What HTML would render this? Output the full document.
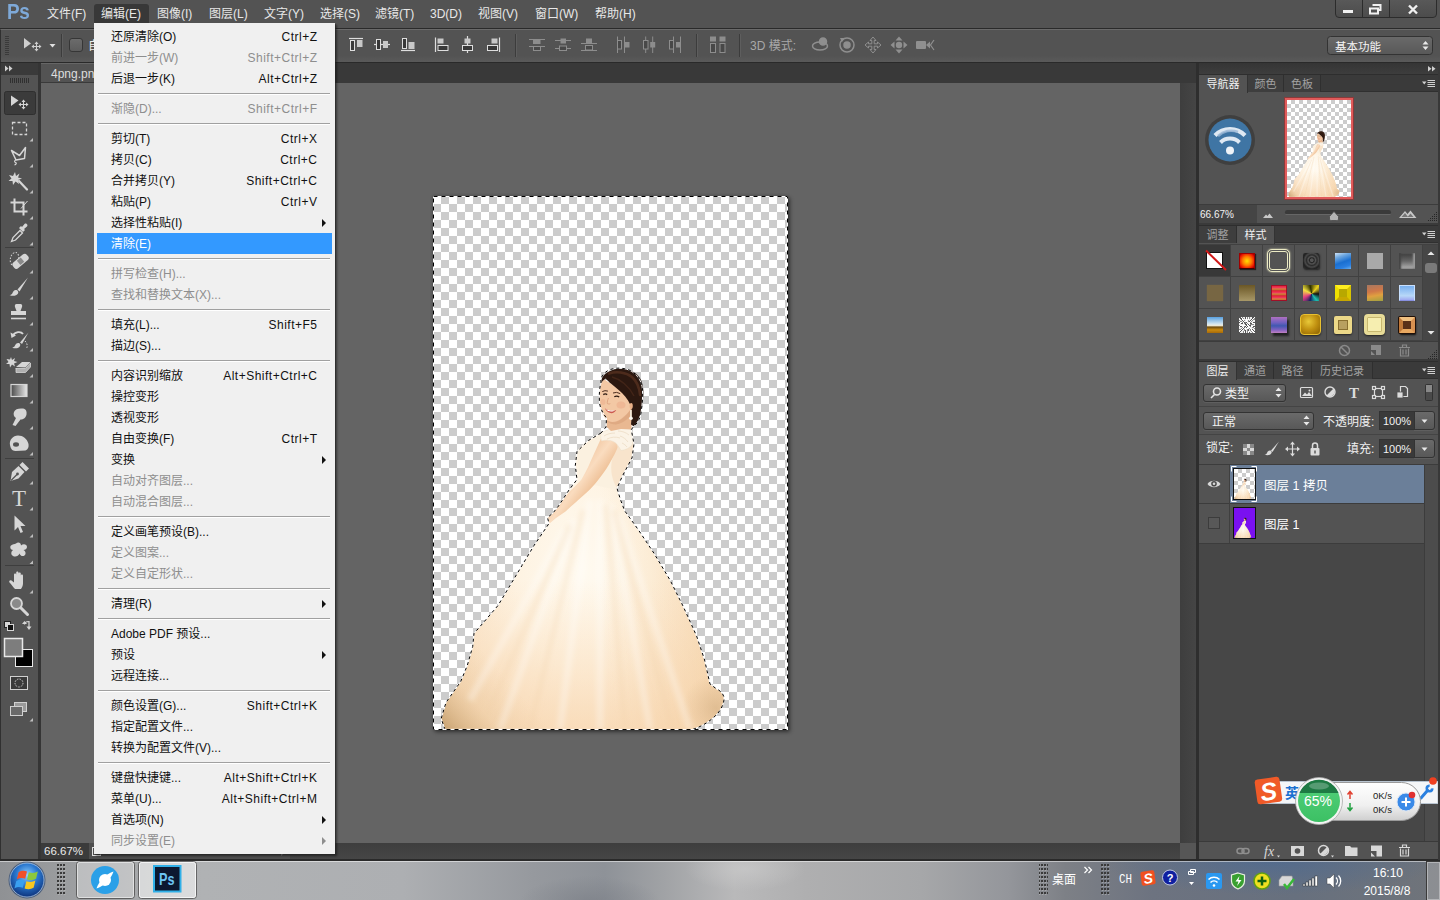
<!DOCTYPE html>
<html lang="zh-CN">
<head>
<meta charset="utf-8">
<title>Photoshop</title>
<style>
*{box-sizing:border-box;margin:0;padding:0}
html,body{width:1440px;height:900px;overflow:hidden;background:#535353}
body{position:relative;font-family:"Liberation Sans","Noto Sans CJK SC",sans-serif;font-size:12px;color:#e6e6e6;-webkit-font-smoothing:antialiased}
.a{position:absolute}
svg{position:absolute;overflow:visible}
/* menubar */
#menubar{left:0;top:0;width:1440px;height:28px;background:#535353}
#menubar .mi{position:absolute;top:6px;height:18px;line-height:17px;font-size:12px;color:#e8e8e8;white-space:nowrap}
#mbline{left:0;top:28px;width:1440px;height:1px;background:#2a2a2a}
#optbar{left:0;top:29px;width:1440px;height:33px;background:linear-gradient(#535353 0,#535353 80%,#5a5a5a 100%);border-top:1px solid #6a6a6a;border-left:1px solid #303030}
#optline{left:0;top:62px;width:1440px;height:1px;background:#2a2a2a}
/* toolbox */
#toolbox{left:0;top:63px;width:38px;height:797px;background:#535353;border-left:1px solid #303030}
#tbhead{left:1px;top:63px;width:37px;height:12px;background:#3a3a3a}
#tbdiv{left:38px;top:63px;width:3px;height:797px;background:#353535}
/* doc area */
#tabbar{left:41px;top:63px;width:1157px;height:20px;background:#393939}
#tab{left:41px;top:63px;width:200px;height:20px;background:#535353;color:#ddd;font-size:12px;line-height:21px;padding-left:10px;border-top:1px solid #666;border-bottom:1px solid #3a3a3a}
#canvas{left:41px;top:83px;width:1139px;height:760px;background:#646464}
#vscroll{left:1180px;top:83px;width:16px;height:760px;background:linear-gradient(90deg,#3e3e3e,#454545)}
#hscroll{left:41px;top:843px;width:1139px;height:16px;background:linear-gradient(#3e3e3e,#464646)}
#scorner{left:1180px;top:843px;width:16px;height:16px;background:#565656}
#statinfo{left:89px;top:843px;width:201px;height:16px;background:#4f4f4f}
#status{left:41px;top:843px;width:48px;height:16px;background:#3b3b3b;color:#eaeaea;font-size:11.500px;line-height:16px;padding-left:3px}
#dockdiv{left:1196px;top:63px;width:3px;height:797px;background:#2e2e2e}
</style>
</head>
<body>
<div class="a" id="menubar">
  <div class="a" style="left:7px;top:0px;font-size:22px;font-weight:bold;color:#7ea9d8;letter-spacing:-0.5px;line-height:24px;transform:scaleX(0.86);transform-origin:0 0">Ps</div>
  <div class="a" style="left:94px;top:4px;width:55px;height:20px;background:#383838;border-radius:3px 3px 0 0"></div>
  <div class="mi" style="left:47px">文件(F)</div>
  <div class="mi" style="left:101px">编辑(E)</div>
  <div class="mi" style="left:157px">图像(I)</div>
  <div class="mi" style="left:209px">图层(L)</div>
  <div class="mi" style="left:264px">文字(Y)</div>
  <div class="mi" style="left:320px">选择(S)</div>
  <div class="mi" style="left:375px">滤镜(T)</div>
  <div class="mi" style="left:430px">3D(D)</div>
  <div class="mi" style="left:478px">视图(V)</div>
  <div class="mi" style="left:535px">窗口(W)</div>
  <div class="mi" style="left:595px">帮助(H)</div>
  <!-- window controls -->
  <div class="a" style="left:1335px;top:-3px;width:102px;height:21px;border:1px solid #2c2c2c;border-radius:0 0 4px 4px;background:linear-gradient(#5a5a5a,#4c4c4c)"></div>
  <div class="a" style="left:1362px;top:0;width:1px;height:17px;background:#2c2c2c"></div>
  <div class="a" style="left:1389px;top:0;width:1px;height:17px;background:#2c2c2c"></div>
  <div class="a" style="left:1343px;top:10px;width:10px;height:3px;background:#f0f0f0"></div>
  <svg style="left:1369px;top:4px" width="13" height="11" viewBox="0 0 13 11"><path d="M3.5 1h8v5h-2.5M1 4.5h8v5h-8z" fill="none" stroke="#f0f0f0" stroke-width="2"/></svg>
  <svg style="left:1408px;top:5px" width="10" height="9" viewBox="0 0 10 9"><path d="M1 0.5L9 8.5M9 0.5L1 8.5" stroke="#f0f0f0" stroke-width="2.4"/></svg>
</div>
<div class="a" id="mbline"></div>
<div class="a" id="optbar"></div>
<div class="a" id="optline"></div>
<div class="a" id="toolbox"></div>
<div class="a" id="tbhead"></div>
<div class="a" id="tbdiv"></div>
<div class="a" id="tabbar"></div>
<div class="a" id="tab">4png.png</div>
<div class="a" id="canvas"></div>
<div class="a" id="vscroll"></div>
<div class="a" id="hscroll"></div>
<div class="a" id="scorner"></div>
<div class="a" id="statinfo"></div>
<div class="a" id="status">66.67%</div>
<svg style="left:89px;top:843px" width="201" height="16" viewBox="89 843 201 16"><rect x="92.500" y="847.500" width="8" height="8" fill="none" stroke="#e0e0e0"/><path d="M281 853l4 -2.500v5z" fill="#d0d0d0" transform="rotate(180 283 853)"/></svg>
<div class="a" id="dockdiv"></div>
<svg style="left:0;top:0" width="1440" height="63" viewBox="0 0 1440 63"><path d="M5 36.5h4" stroke="#3a3a3a"/><path d="M5 38.5h4" stroke="#3a3a3a"/><path d="M5 40.5h4" stroke="#3a3a3a"/><path d="M5 42.5h4" stroke="#3a3a3a"/><path d="M5 44.5h4" stroke="#3a3a3a"/><path d="M5 46.5h4" stroke="#3a3a3a"/><path d="M5 48.5h4" stroke="#3a3a3a"/><path d="M5 50.5h4" stroke="#3a3a3a"/><path d="M5 52.5h4" stroke="#3a3a3a"/><path d="M5 54.5h4" stroke="#3a3a3a"/><path d="M24 38V48.500L31 43.500z" fill="#cfcfcf"/><path d="M36.500 42.500v8M32.500 46.500h8" stroke="#cfcfcf" stroke-width="1.100"/><path d="M36.500 41.500l2 2.400h-4zM36.500 51.500l2 -2.400h-4zM31.500 46.500l2.400 -2v4zM41.500 46.500l-2.400 -2v4z" fill="#cfcfcf"/><path d="M49.500 44h6l-3 3.500z" fill="#e0e0e0"/><path d="M61.500 34v23" stroke="#3c3c3c"/><path d="M62.500 34v23" stroke="#5e5e5e"/><defs><linearGradient id="cbg" x1="0" y1="0" x2="0" y2="1"><stop offset="0" stop-color="#6c6c6c"/><stop offset="1" stop-color="#5c5c5c"/></linearGradient></defs><rect x="69.500" y="38.500" width="13" height="13" rx="2.500" fill="url(#cbg)" stroke="#363636"/><text x="88" y="50" font-size="12" fill="#f0f0f0" font-family="Liberation Sans,Noto Sans CJK SC,sans-serif">自动选择:</text><path d="M349 38.500h14" stroke="#dedede" stroke-width="1.200"/><rect x="350.5" y="40.500" width="4" height="10" fill="#383838" stroke="#dedede"/><rect x="357" y="40" width="5.500" height="7" fill="#c8c8c8"/><path d="M374 44.500h16" stroke="#dedede" stroke-width="1.200"/><rect x="376.5" y="39.500" width="4" height="10" fill="#383838" stroke="#dedede"/><rect x="383" y="41" width="5" height="7" fill="#c8c8c8"/><path d="M401 50.500h14" stroke="#dedede" stroke-width="1.200"/><rect x="402.5" y="38.500" width="4" height="10" fill="#383838" stroke="#dedede"/><rect x="408.5" y="42" width="6" height="7" fill="#c8c8c8"/><path d="M435.5 37.500v14.500" stroke="#dedede" stroke-width="1.200"/><rect x="437.5" y="38.500" width="6" height="5" fill="#c8c8c8"/><rect x="438" y="45.500" width="10" height="5" fill="#383838" stroke="#dedede"/><path d="M467.5 36v17" stroke="#dedede" stroke-width="1.200"/><rect x="464.5" y="38.500" width="6" height="5" fill="#c8c8c8"/><rect x="462.5" y="45.500" width="10" height="5" fill="#383838" stroke="#dedede"/><path d="M499.5 37.500v14.500" stroke="#dedede" stroke-width="1.200"/><rect x="491.5" y="38.500" width="6" height="5" fill="#c8c8c8"/><rect x="487.5" y="45.500" width="10" height="5" fill="#383838" stroke="#dedede"/><path d="M515.500 34v23" stroke="#3c3c3c"/><path d="M516.500 34v23" stroke="#5e5e5e"/><path d="M529 39.5h16" stroke="#8d8d8d" stroke-width="1"/><rect x="533" y="40" width="7.5" height="4" fill="#8d8d8d"/><path d="M529 46.5h16" stroke="#8d8d8d" stroke-width="1"/><rect x="533.5" y="46.5" width="7" height="4" fill="#484848" stroke="#8d8d8d"/><rect x="560.5" y="38.5" width="5.5" height="5" fill="#8d8d8d"/><path d="M555 40.5h16" stroke="#8d8d8d" stroke-width="1"/><rect x="559.5" y="46" width="7" height="4.5" fill="#484848" stroke="#8d8d8d"/><path d="M555 48.5h4.5" stroke="#8d8d8d" stroke-width="1"/><path d="M566.5 48.5h4.5" stroke="#8d8d8d" stroke-width="1"/><rect x="586" y="38.5" width="6" height="5" fill="#8d8d8d"/><path d="M581 43.5h16" stroke="#8d8d8d" stroke-width="1"/><rect x="585.5" y="45.5" width="7" height="4.5" fill="#484848" stroke="#8d8d8d"/><path d="M581 50.5h16" stroke="#8d8d8d" stroke-width="1"/><path d="M617.5 36.5v16.5" stroke="#8d8d8d" stroke-width="1"/><rect x="617.5" y="40.5" width="4" height="8.5" fill="#484848" stroke="#8d8d8d"/><path d="M624.5 36.5v16.5" stroke="#8d8d8d" stroke-width="1"/><rect x="625" y="42" width="4.5" height="5.5" fill="#8d8d8d"/><rect x="643.5" y="40.5" width="4.5" height="8.5" fill="#484848" stroke="#8d8d8d"/><path d="M645.7 36.5v4" stroke="#8d8d8d" stroke-width="1"/><path d="M645.7 49v4" stroke="#8d8d8d" stroke-width="1"/><rect x="650.2" y="42" width="5" height="5.5" fill="#8d8d8d"/><path d="M652.7 36.5v16.5" stroke="#8d8d8d" stroke-width="1"/><path d="M673.5 36.5v16.5" stroke="#8d8d8d" stroke-width="1"/><rect x="669.5" y="40.5" width="4" height="8.5" fill="#484848" stroke="#8d8d8d"/><path d="M680.5 36.5v16.5" stroke="#8d8d8d" stroke-width="1"/><rect x="676" y="42" width="4.5" height="5.5" fill="#8d8d8d"/><path d="M696.500 34v23" stroke="#3c3c3c"/><path d="M697.500 34v23" stroke="#5e5e5e"/><rect x="710" y="36.5" width="6" height="5" fill="#8d8d8d"/><rect x="710.5" y="43.5" width="5" height="9" fill="#484848" stroke="#8d8d8d"/><rect x="719.5" y="36.5" width="6" height="5" fill="#8d8d8d"/><rect x="720" y="43.5" width="5" height="9" fill="#484848" stroke="#8d8d8d"/><path d="M739.500 34v23" stroke="#3c3c3c"/><path d="M740.500 34v23" stroke="#5e5e5e"/><text x="750" y="49.500" font-size="12" fill="#a8a8a8" font-family="Liberation Sans,Noto Sans CJK SC,sans-serif" letter-spacing="0">3D 模式:</text><g fill="none" stroke="#8f8f8f" stroke-width="1.500"><ellipse cx="820" cy="46" rx="7.500" ry="4"/><circle cx="823" cy="41.500" r="3.500" fill="#8f8f8f"/></g><g fill="none" stroke="#8f8f8f" stroke-width="1.500"><circle cx="847" cy="45" r="7"/><circle cx="847" cy="45" r="3" fill="#8f8f8f"/></g><path d="M840 38l5 0l-3 4z" fill="#8f8f8f"/><path d="M873 37l3 3.5h-1.8v3.3h3.3v-1.8l3.5 3l-3.5 3v-1.8h-3.3v3.3h1.8l-3 3.5l-3 -3.5h1.8v-3.3h-3.3v1.8l-3.5 -3l3.5 -3v1.8h3.3v-3.3h-1.8z" fill="none" stroke="#8f8f8f" stroke-width="1"/><g fill="#8f8f8f"><path d="M899 36.500l-3.500 4h7zM899 53.500l-3.500 -4h7zM890.500 45l4 -3.500v7zM907.500 45l-4 -3.500v7z"/><circle cx="899" cy="45" r="3.200"/></g><g fill="#8f8f8f"><rect x="916" y="41" width="10" height="8" rx="1"/><path d="M926 45l4 -3.500v7z"/></g><path d="M934 40l-3.500 5l3.500 5" fill="none" stroke="#8f8f8f" stroke-width="1.200"/><defs><linearGradient id="ddg" x1="0" y1="0" x2="0" y2="1"><stop offset="0" stop-color="#6a6a6a"/><stop offset="1" stop-color="#585858"/></linearGradient></defs><rect x="1327.500" y="36.500" width="105" height="18" rx="3" fill="url(#ddg)" stroke="#333"/><text x="1335" y="50.500" font-size="11.500" fill="#f4f4f4" font-family="Liberation Sans,Noto Sans CJK SC,sans-serif">基本功能</text><path d="M1422.500 44.500l3 -3.500l3 3.500zM1422.500 46.500l3 3.500l3 -3.500z" fill="#e8e8e8"/></svg>
<svg style="left:0;top:0" width="41" height="860" viewBox="0 0 41 860"><path d="M5 65.500l3.500 3l-3.500 3zM9 65.500l3.500 3l-3.500 3z" fill="#d0d0d0"/><path d="M10.500 78v5M12.500 78v5M14.500 78v5M16.500 78v5M18.500 78v5M20.500 78v5M22.500 78v5M24.500 78v5M26.500 78v5M28.500 78v5" stroke="#303030" stroke-width="1"/><rect x="4.500" y="91.500" width="31" height="23" rx="2" fill="#3b3b3b" stroke="#2f2f2f"/><g transform="translate(19,103)"><path d="M-8 -7.500V3L-0.500 -2.500z" fill="#d6d6d6"/><path d="M4.500 -2.500v8M0.500 1.500h8" stroke="#d6d6d6" stroke-width="1.100" fill="none"/><path d="M4.500 -3.500l2 2.400h-4zM4.500 6.500l2 -2.400h-4zM-0.500 1.500l2.400 -2v4zM9.500 1.500l-2.400 -2v4z" fill="#d6d6d6"/></g><g transform="translate(19,129)"><rect x="-6.5" y="-6.5" width="14" height="12" fill="none" stroke="#d6d6d6" stroke-width="1.3" stroke-dasharray="3 2"/><path d="M14 9v3.5h-3.5z" fill="#bdbdbd"/></g><g transform="translate(19,155)"><path d="M-7.5 -4.5L0.5 0.5L6.5 -7.5L5.5 3.5L-3 5z" fill="none" stroke="#d6d6d6" stroke-width="1.5" stroke-linejoin="round"/><path d="M-3 5c-1.5 0-2 2-0.5 2.5s0.5 2-1 2.500" fill="none" stroke="#d6d6d6" stroke-width="1.2"/><path d="M14 9v3.5h-3.5z" fill="#bdbdbd"/></g><g transform="translate(19,181)"><path d="M-4 -9l1 4l3.500 -2.500l-1.500 4l4 1l-4 1.500l1 4l-3.500 -2.500l-2.500 3.500l-0.500 -4l-4 0l3 -2.500l-2.500 -3.500l4 1z" fill="#d6d6d6"/><path d="M0 0l8 8.500" stroke="#d6d6d6" stroke-width="2.2" stroke-linecap="round"/><path d="M14 9v3.5h-3.5z" fill="#bdbdbd"/></g><g transform="translate(19,207)"><path d="M-4.5 -8.500v13h13M-8.500 -4.500h13v13" fill="none" stroke="#d6d6d6" stroke-width="2"/><path d="M2 1.500L8.500 -6" stroke="#d6d6d6" stroke-width="1"/><path d="M14 9v3.5h-3.5z" fill="#bdbdbd"/></g><g transform="translate(19,233)"><path d="M-7.500 8.500l1.500 -4l7 -7l2.500 2.500l-7 7z" fill="none" stroke="#d6d6d6" stroke-width="1.300"/><path d="M0 -5l2 -2l1 1l2.500 -3c1.500 -1.500 4 1 2.500 2.500l-3 2.500l1 1l-2 2z" fill="#d6d6d6"/><path d="M14 9v3.5h-3.5z" fill="#bdbdbd"/></g><path d="M5 247.5h29" stroke="#3e3e3e"/><g transform="translate(19,261)"><ellipse cx="-5" cy="-1" rx="4" ry="6.500" fill="none" stroke="#d6d6d6" stroke-width="1" stroke-dasharray="1.500 1.500" transform="rotate(15)"/><rect x="-9" y="-3.500" width="18" height="7.500" rx="3" fill="#d6d6d6" transform="rotate(-40) translate(1,1)"/><rect x="-2.500" y="-2.500" width="5" height="5.500" fill="#8a8a8a" transform="rotate(-40) translate(1,1)"/><path d="M14 9v3.5h-3.5z" fill="#bdbdbd"/></g><g transform="translate(19,287)"><path d="M9 -9.500L-1.500 2.500L0.500 4.500z" fill="#d6d6d6"/><path d="M-2.500 3c-2 -0.500 -3.500 1 -4 3c-0.500 1.500 -2 2 -3 2c3 1.500 7 1 8.500 -1.500c0.800 -1.500 0 -3 -1.500 -3.500z" fill="#d6d6d6"/><path d="M14 9v3.5h-3.5z" fill="#bdbdbd"/></g><g transform="translate(19,313)"><path d="M-2.500 -9h4c1.500 0 2 1.500 1.500 3l-1.500 4h5.500v4h-15v-4h5.500l-1.500 -4c-0.500 -1.500 0 -3 1.500 -3z" fill="#d6d6d6"/><path d="M-8 5.500h15" stroke="#d6d6d6" stroke-width="1.600"/><path d="M14 9v3.5h-3.5z" fill="#bdbdbd"/></g><g transform="translate(19,339)"><path d="M9.500 -6.500L1 3.500L3 5z" fill="#d6d6d6"/><path d="M0 4c-2 -0.500 -3.500 1 -4 2.500c-0.500 1.500 -2 2 -3 2c3 1.500 7 1 8 -1.500c0.700 -1.500 0 -2.500 -1 -3z" fill="#d6d6d6"/><path d="M-6 -3.500c2 -4 8 -4.500 10 -1.500" fill="none" stroke="#d6d6d6" stroke-width="1.800"/><path d="M-8.500 -6.500l1 5.500l4.500 -2.500z" fill="#d6d6d6"/><path d="M6 2c2 2 3 5 1.500 7.500" fill="none" stroke="#d6d6d6" stroke-width="1" stroke-dasharray="1.500 1.500"/><path d="M14 9v3.5h-3.5z" fill="#bdbdbd"/></g><g transform="translate(19,365)"><path d="M-8 -8l1 3l3 -2l-1 3l3.500 1l-3.500 1.500l1 3l-3 -2l-2 3l-0.500 -3.500l-3.500 0l2.500 -2l-2 -3l3.500 0.500z" fill="#d6d6d6"/><path d="M-3 2l6 -5h8.500l-5 5.500z" fill="#d6d6d6"/><path d="M-3 3v4.500h9.500l5 -5.500v-4l-5 5.500h-9.500z" fill="#b0b0b0" stroke="#d6d6d6" stroke-width="0.800"/><path d="M14 9v3.5h-3.5z" fill="#bdbdbd"/></g><defs><linearGradient id="tg" x1="0" x2="1"><stop offset="0" stop-color="#4a4a4a"/><stop offset="1" stop-color="#e8e8e8"/></linearGradient></defs><g transform="translate(19,391)"><rect x="-8" y="-6.500" width="16" height="12" fill="url(#tg)" stroke="#d6d6d6" stroke-width="1.200"/><path d="M14 9v3.5h-3.5z" fill="#bdbdbd"/></g><g transform="translate(19,417)"><path d="M-5 -5c1 -3 5 -4 9 -3.500c3 0.500 4 3 3.500 6c-0.500 3 -3 5 -6 5l-5 6.500l-3 -1l3.500 -7c-2 -1 -3 -3.500 -2 -6z" fill="#d6d6d6"/><path d="M14 9v3.5h-3.5z" fill="#bdbdbd"/></g><g transform="translate(19,443)"><path d="M-9 2c-1 -5 3 -9.500 8 -9.500c5 0 9 3 10.500 8.500c0.500 3 -0.500 5.500 -3 6.500l-10 0.500c-3.500 0 -5 -3 -5.500 -6z" fill="#d6d6d6"/><ellipse cx="-3" cy="1.500" rx="3" ry="2.200" fill="#535353"/><path d="M14 9v3.5h-3.5z" fill="#bdbdbd"/></g><path d="M5 458.5h29" stroke="#3e3e3e"/><g transform="translate(19,472)"><path d="M-8.500 9l1.500 -9l6.500 -6l6 6l-6 6.500z" fill="#d6d6d6"/><path d="M0.500 -7l3 -3l6.500 6.500l-3 3z" fill="#d6d6d6"/><path d="M-8 8.500l6 -6" stroke="#535353" stroke-width="1.200"/><circle cx="-1.500" cy="2" r="1.400" fill="#535353"/><path d="M14 9v3.5h-3.5z" fill="#bdbdbd"/></g><g transform="translate(19,498)"><text x="0" y="8" text-anchor="middle" font-family="Liberation Serif,serif" font-size="23" fill="#d6d6d6">T</text><path d="M14 9v3.5h-3.5z" fill="#bdbdbd"/></g><g transform="translate(19,525)"><path d="M-4.500 -9.500v15l3.500 -3.500l2.500 6l2.500 -1l-2.500 -6h5z" fill="#d6d6d6"/><path d="M14 9v3.5h-3.5z" fill="#bdbdbd"/></g><g transform="translate(19,551.5)"><path d="M-3 -8c2 -2 5 -1 5 2c2 -2 6 -1.500 6 1.500c0 2 -2 3 -3.500 3c2 1 3 4 1 5.500c-2 1.500 -4.500 0 -5 -2c-1 2.500 -4 4 -6.500 2.500c-2.500 -1.500 -2 -4.500 0 -6c-2.500 0 -3.500 -3 -2 -4.500c1.500 -1.500 3.500 -1 5 -2z" fill="#d6d6d6"/><path d="M14 9v3.5h-3.5z" fill="#bdbdbd"/></g><path d="M5 565.5h29" stroke="#3e3e3e"/><g transform="translate(19,581)"><path d="M-4 8c-2 -2 -3.500 -4.500 -5.500 -6.500c-1 -1.500 0.500 -3 2 -2l2.500 2v-8c0 -1.500 2.200 -1.500 2.200 0v-2c0 -1.500 2.300 -1.500 2.300 0v2v-1c0 -1.500 2.300 -1.500 2.300 0v3v-1c0 -1.500 2.200 -1.500 2.200 0v8c0 2 -1 4 -2 5.500z" fill="#d6d6d6"/><path d="M14 9v3.5h-3.5z" fill="#bdbdbd"/></g><g transform="translate(19,606)"><circle cx="-2.500" cy="-2.500" r="5.500" fill="#8a8a8a" stroke="#d6d6d6" stroke-width="1.800"/><path d="M2 2l6.500 6.500" stroke="#d6d6d6" stroke-width="3" stroke-linecap="round"/></g><rect x="4.500" y="621.500" width="6" height="6" fill="#d6d6d6" stroke="#222" stroke-width="1"/><rect x="7.500" y="624.500" width="6" height="6" fill="#111" stroke="#d6d6d6" stroke-width="1"/><path d="M24.500 624.500c0 -2.500 2 -3 4.500 -3v6" fill="none" stroke="#d6d6d6" stroke-width="1.200"/><path d="M22 624l2.500 -3l2.500 3zM26.500 626.500l2.500 3.500l2.500 -3.500z" fill="#d6d6d6"/><rect x="15.500" y="649.500" width="17" height="17" fill="#000" stroke="#e8e8e8" stroke-width="1"/><rect x="4.500" y="638.500" width="18" height="18" fill="#7d7d7d" stroke="#e8e8e8" stroke-width="1.500"/><rect x="10.500" y="676.500" width="17" height="13" fill="#3a3a3a" stroke="#d0d0d0" stroke-width="1"/><circle cx="19" cy="683" r="4" fill="none" stroke="#d0d0d0" stroke-width="1" stroke-dasharray="1.500 1.200"/><rect x="14.500" y="702.500" width="12" height="9" fill="#9a9a9a" stroke="#d0d0d0" stroke-width="1"/><rect x="10.500" y="706.500" width="12" height="9" fill="#6a6a6a" stroke="#d0d0d0" stroke-width="1"/><path d="M33 718v3.500h-3.500z" fill="#bdbdbd"/></svg>
<!-- document -->
<div class="a" style="left:433px;top:196px;width:355px;height:534px;box-shadow:2px 2px 4px rgba(0,0,0,.45),0 0 3px rgba(0,0,0,.25);background-color:#fff;background-image:conic-gradient(#ccc 25%,#fff 0 50%,#ccc 0 75%,#fff 0);background-size:16px 16px;background-position:0 0"></div>
<svg style="left:0;top:0" width="1440" height="900" viewBox="0 0 1440 900">
<defs>
  <radialGradient id="dressg" gradientUnits="userSpaceOnUse" cx="585" cy="570" r="190" gradientTransform="translate(585 570) scale(0.80 1.25) translate(-585 -570)">
    <stop offset="0" stop-color="#fffaf0"/><stop offset="0.450" stop-color="#fef3e2"/><stop offset="0.750" stop-color="#fbe8d0"/><stop offset="1" stop-color="#f6dcbc"/>
  </radialGradient>
  <filter id="blur2" x="-20%" y="-20%" width="140%" height="140%"><feGaussianBlur stdDeviation="2.500"/></filter>
  <linearGradient id="dressb" gradientUnits="userSpaceOnUse" x1="0" y1="580" x2="0" y2="730"><stop offset="0" stop-color="#f9d8b2" stop-opacity="0"/><stop offset="1" stop-color="#f7d2a8" stop-opacity=".6"/></linearGradient>
  <linearGradient id="dressl" gradientUnits="userSpaceOnUse" x1="440" y1="722" x2="500" y2="670"><stop offset="0" stop-color="#b8905c" stop-opacity=".7"/><stop offset="0.500" stop-color="#d9b585" stop-opacity=".2"/><stop offset="1" stop-color="#d9b585" stop-opacity="0"/></linearGradient>
  <linearGradient id="dressr" gradientUnits="userSpaceOnUse" x1="600" y1="0" x2="725" y2="0"><stop offset="0" stop-color="#f6d6ac" stop-opacity="0"/><stop offset="1" stop-color="#f3cfa0" stop-opacity=".55"/></linearGradient>
  <radialGradient id="dressr2" gradientUnits="userSpaceOnUse" cx="716" cy="708" r="34"><stop offset="0" stop-color="#d2ae82" stop-opacity=".6"/><stop offset="1" stop-color="#d8b48a" stop-opacity="0"/></radialGradient>
  <clipPath id="dressclip"><path id="dressp" d="M601 433C595 436 592 438 588.500 440.500C583 444 579 448 577 451.500C575 456 575 461 575.300 465.500C575.500 471 576 476 577 479.500L569 490L558.500 506L553 513L547.500 517.500L549 523.500L534 545.500L522 565.500L510 585.500L498 605.500L483.500 622.500L474 633.500L472.700 646.500L467.300 665.500L460.700 681.500L446 702.500L441.200 718.500L444.700 728.700L693 729.300C703 726 712 720 718 713C722 708 724.500 702 724 697.300C723 693 720 690.500 716 688.500L710 684L704.600 660L696.600 636L683.300 606.600L670 580L654 553.300L638 529.300L624.600 510.700L620.600 500L617 488.300L622.400 476L632 458L634 444L631.300 429.700L622 427.500L610 429.500Z"/></clipPath>
  <path id="antsfig" d="M601 433L588.500 440.500L577 451.500L575.300 465.500L577 479.500L569 490L558.500 506L553 513L547.500 517.500L549 523.500L534 545.500L522 565.500L510 585.500L498 605.500L483.500 622.500L474 633.500L472.700 646.500L467.300 665.500L460.700 681.500L446 702.500L441.200 718.500L444.700 728.700M693 729.300C703 726 712 720 718 713C722 708 724.500 702 724 697.300C723 693 720 690.500 716 688.500L710 684L704.600 660L696.600 636L683.300 606.600L670 580L654 553.300L638 529.300L624.600 510.700L620.600 500L617 488.300L622.400 476L632 458L634 444L631.300 429.700L633.500 426.500C637 424 640 419 641 413C642 406 643 398 642.500 390C642 381 637 373.500 629 370C622 367.500 615 367.500 609 370C603 373 600 378 601 383C599.500 387 599 395 599.500 403C600.500 409 603 413.500 606.500 418L606 427L601 433"/>
  <g id="bride">
    <!-- dress -->
    <g clip-path="url(#dressclip)">
      <rect x="433" y="420" width="356" height="312" fill="url(#dressg)"/>
      <rect x="433" y="420" width="356" height="312" fill="url(#dressr)"/>
      <rect x="433" y="420" width="356" height="312" fill="url(#dressb)"/>
      <rect x="433" y="420" width="356" height="312" fill="url(#dressl)"/>
      <rect x="433" y="420" width="356" height="312" fill="url(#dressr2)"/>
      <path d="M590 500L560 729M600 500L600 729M610 505L650 729M575 520L500 729M618 515L690 729M565 530L470 700" stroke="#fff" stroke-opacity=".3" stroke-width="7" fill="none" filter="url(#blur2)"/>
      <path d="M583 510L530 729M606 505L625 729M614 510L672 729M570 525L485 720" stroke="#efcfa8" stroke-opacity=".28" stroke-width="5" fill="none" filter="url(#blur2)"/>
      <!-- bodice shading -->
      <path d="M577 452L600 434L631 430L634 444L622 476L617 490L580 482z" fill="#fbf1e0"/>
    </g>
    <!-- back lace (skin showing) -->
    <path d="M617 447C622 444 628 438 631.500 431L634 444L632 458L622.400 476L617 488C612 480 610 470 612 460z" fill="#f8e4cc"/>
    <!-- arm -->
    <defs><linearGradient id="armg" gradientUnits="userSpaceOnUse" x1="585" y1="455" x2="605" y2="470"><stop offset="0" stop-color="#f2c9a4"/><stop offset="0.500" stop-color="#fadcbf"/><stop offset="1" stop-color="#f0c49c"/></linearGradient></defs>
    <path d="M601 438.500C604 436 612 437 616 441C618 444 618 447 617 449C614 456 610 463 606.400 468.800C603 474 599 479 595.800 483C592 487.500 588 491.500 583.300 495.400C577 501 571 506.500 565.500 511.400L556 518L549.500 523.500L547.500 517.500L553 512.500L556.700 508C561 503 565 497.500 569 492C573.500 488 577.500 484 581.500 479.400C585 473.500 588 467.500 590.400 461.700C594 454 597.500 446 601 438.500z" fill="url(#armg)"/>
    <!-- lace sleeve -->
    <path d="M601 433C605 430.500 612 428 618 427.500C624 427 629 428 631.300 429.700C633 434 633.500 439 632.500 444C630 448 626 450 621 450.500C619 447 617.500 444.500 615 442.500C611 440 606 439.500 601.500 441C600.500 438 600.500 435 601 433z" fill="#fbf3e6" stroke="#eadcc6" stroke-width="0.500"/>
    <path d="M604 436c3 -2 7 -3 11 -3M607 439c4 -2 9 -2.500 13 -1M618 431c4 0 8 1.500 11 4M620 436c3 1 6 3 8 6M622 443c2 1 4 2.500 5 4" stroke="#e6d3b8" stroke-width="0.700" fill="none" opacity=".8"/>
    <!-- neck + face -->
    <path d="M606 417L606.300 426.500L611 431L621 429L631.500 429.500L632 408z" fill="#e9b891"/>
    <path d="M601 382.500C600 386 599.500 390 599.300 395C599.200 400 599.800 405 601 409.500C602 413 603.500 416 605.500 418.500C608 421.500 612 423 616 422C622 420.500 628 414 631.500 408C631 401 626 394 620.500 389.500C615 385.500 608 382.500 603 378.500z" fill="#f3c8a4"/>
    <ellipse cx="621" cy="405" rx="4.500" ry="3.500" fill="#e79a7c" opacity=".35"/>
    <ellipse cx="603" cy="402" rx="2.500" ry="3" fill="#e79a7c" opacity=".3"/>
    <path d="M606 420C610 423 616 422.500 621 419C625 416 629 412 631.500 408L631.800 414C628 419 622 424 616 424.500C612 424.500 608 423 606 420z" fill="#d9a07a" opacity=".6"/>
    <path d="M602.300 391.600q2.600 -1.600 5.600 -0.500M613 393q3.600 -1.500 7.200 0.600" stroke="#4a2c1e" stroke-width="1" fill="none"/>
    <path d="M603.300 394.600q1.900 -1.300 3.900 0M614.300 396.800q2.500 -1.500 4.900 0.300" stroke="#2a1810" stroke-width="1.300" fill="none"/>
    <path d="M608.500 398c-0.800 2 -1.500 4 -1.200 5.500c0.800 0.600 2 0.600 3 0.200" stroke="#d99c78" stroke-width="0.800" fill="none"/>
    <path d="M604.800 408.300C607.500 410.300 612 411.500 616.300 410C614 414.500 608 414.500 604.800 408.300z" fill="#cc5a50"/>
    <path d="M605.800 409C608 410.300 612 411 615.200 410.200C612.500 412.200 608 412 605.800 409z" fill="#fff"/>
    <!-- hair -->
    <path d="M601 383C601 378 604 374.500 608 372C613 369 619 368 624 368.500C631 369.500 637 373 640.500 379C643.500 385 644 392 643 399C642.500 406 641.500 412 639.500 417C638 421 636 424 634 426.500L631 424.500C631.500 420 631.800 414 631.500 408C630 403 627 398 622 393C617 388 611 384 605.500 378.500C603.500 380 602 381.500 601 383z" fill="#2c1810"/>
    <path d="M609 373.500C616 371 626 372 632 377C637 381.500 639.500 388 640 395" stroke="#6a3c26" stroke-width="2.500" fill="none" opacity=".55" stroke-linecap="round"/>
    <path d="M612 377C620 379 629 386 634 396" stroke="#5a3220" stroke-width="1.500" fill="none" opacity=".5"/>
    <!-- ear + earring -->
    <ellipse cx="631.200" cy="406" rx="1.600" ry="3" fill="#e8b088"/>
    <path d="M630.900 410v7" stroke="#f4ecdc" stroke-width="1.700"/><circle cx="631" cy="418.300" r="1.800" fill="#fcf8f0"/>
  </g>
</defs>
<use href="#bride"/>
<!-- marching ants: figure -->
<use href="#antsfig" fill="none" stroke="#fff" stroke-width="1"/>
<use href="#antsfig" fill="none" stroke="#000" stroke-width="1" stroke-dasharray="3 3"/>
<!-- marching ants: doc -->
<rect x="433.500" y="196.500" width="354" height="533" fill="none" stroke="#fff" stroke-width="1"/>
<rect x="433.500" y="196.500" width="354" height="533" fill="none" stroke="#000" stroke-width="1" stroke-dasharray="4 4"/>
</svg>
<style>
.ptabrow{left:1199px;width:241px;height:17px;background:#3a3a3a;border-bottom:1px solid #303030;box-shadow:0 -1px 0 #2e2e2e}
.ptab{position:absolute;top:0;height:17px;font-size:11px;line-height:19px;text-align:center;color:#a2a2a2;border-right:1px solid #2f2f2f;background:#3e3e3e}
.ptab.on{background:#535353;color:#f0f0f0;height:18px;border-right:1px solid #333}
.pmenu{position:absolute;right:5px;top:5px;width:13px;height:8px}
</style>
<div class="a" style="left:1199px;top:63px;width:241px;height:12px;background:linear-gradient(#353535,#3e3e3e)"></div>
<svg style="left:1428px;top:66px" width="8" height="6"><path d="M0 0l3.500 2.700l-3.500 2.700zM4 0l3.500 2.700l-3.500 2.700z" fill="#d0d0d0"/></svg>
<div class="a ptabrow" style="top:75px">
  <div class="ptab on" style="left:0;width:49px">导航器</div>
  <div class="ptab" style="left:49px;width:36px">颜色</div>
  <div class="ptab" style="left:85px;width:37px">色板</div>
  <svg class="pmenu" viewBox="0 0 13 8"><path d="M0 1.500h4.500l-2.250 3z" fill="#d0d0d0"/><path d="M5.500 0.500h7.500M5.500 2.500h7.500M5.500 4.500h7.500M5.500 6.500h7.500" stroke="#d0d0d0"/></svg>
</div>
<div class="a" style="left:1199px;top:93px;width:241px;height:111px;background:#535353"></div>
<!-- wifi icon -->
<svg style="left:1204px;top:114px" width="52" height="52" viewBox="-26 -26 52 52">
  <circle r="25" fill="#3f3f3f"/><circle r="21.500" fill="#3f75a4"/>
  <path d="M-15 -4.500A21 21 0 0 1 15 -4.500" fill="none" stroke="#dfe9f3" stroke-width="4.200"/>
  <path d="M-9.500 2.500A13.500 13.500 0 0 1 9.500 2.500" fill="none" stroke="#dfe9f3" stroke-width="4"/>
  <path d="M-12 -4A19 19 0 0 1 8 -8" fill="none" stroke="#9bb8d6" stroke-width="2.500" opacity=".8"/>
  <circle cy="10.500" r="4" fill="#eef3f8"/>
</svg>
<!-- nav thumb -->
<div class="a" id="navthumb" style="left:1284px;top:97px;width:70px;height:103px;background:#e05a5a;border:1px solid #8a3a3a"></div>
<div class="a" style="left:1287px;top:100px;width:64px;height:97px;background-color:#fff;background-image:conic-gradient(#ccc 25%,#fff 0 50%,#ccc 0 75%,#fff 0);background-size:8px 8px;background-position:0 0"></div>
<svg style="left:1287px;top:100px" width="64" height="97" viewBox="433 196 355 534" preserveAspectRatio="none"><use href="#bride"/></svg>
<!-- nav footer -->
<div class="a" style="left:1199px;top:204px;width:241px;height:1px;background:#3c3c3c"></div>
<div class="a" style="left:1199px;top:205px;width:241px;height:18px;background:#535353"></div>
<div class="a" style="left:1199px;top:205px;width:58px;height:18px;background:#454545;font-size:10px;line-height:19px;color:#f2f2f2;padding-left:1px">66.67%</div>
<svg style="left:1199px;top:205px" width="241" height="18" viewBox="1199 205 241 18">
  <path d="M1263 218l3 -3.500l1.500 1.500l2 -2.500l3.500 4.500z" fill="#c8c8c8"/>
  <rect x="1285" y="210" width="106" height="4.500" rx="2.200" fill="#3a3a3a"/><rect x="1285.500" y="214" width="105" height="1" fill="#666"/>
  <path d="M1334 211.500l4.500 5v2.500c0 1 -1 1.500 -2 1.500h-5c-1 0 -2 -0.500 -2 -1.500v-2.500z" fill="#b4b4b4" stroke="#444" stroke-width="0.700"/>
  <path d="M1399 218l6 -7l2.500 3l3 -3.500l6 7.500z" fill="#c8c8c8"/><path d="M1401.500 217l3.500 -4l3 4zM1407.500 217l3 -3.500l3 3.500z" fill="#535353" opacity=".7"/>
  <g fill="#262626"><rect x="1436" y="220" width="1" height="1"/><rect x="1434" y="220" width="1" height="1"/><rect x="1432" y="220" width="1" height="1"/><rect x="1430" y="220" width="1" height="1"/><rect x="1428" y="220" width="1" height="1"/><rect x="1436" y="218" width="1" height="1"/><rect x="1434" y="218" width="1" height="1"/><rect x="1432" y="218" width="1" height="1"/><rect x="1430" y="218" width="1" height="1"/><rect x="1436" y="216" width="1" height="1"/><rect x="1434" y="216" width="1" height="1"/><rect x="1432" y="216" width="1" height="1"/><rect x="1436" y="214" width="1" height="1"/><rect x="1434" y="214" width="1" height="1"/><rect x="1436" y="212" width="1" height="1"/></g>
</svg>
<div class="a" style="left:1199px;top:223px;width:241px;height:3px;background:#3a3a3a"></div>
<div class="a" style="left:1438px;top:63px;width:2px;height:797px;background:#383838;z-index:3"></div>
<style>
.sw{position:absolute;width:16px;height:16px}
.cell{position:absolute;width:31px;height:31px;background:#535353}
</style>
<div class="a ptabrow" style="top:226px">
  <div class="ptab" style="left:0;width:38px">调整</div>
  <div class="ptab on" style="left:38px;width:38px">样式</div>
  <svg class="pmenu" viewBox="0 0 13 8"><path d="M0 1.500h4.500l-2.250 3z" fill="#d0d0d0"/><path d="M5.500 0.500h7.500M5.500 2.500h7.500M5.500 4.500h7.500M5.500 6.500h7.500" stroke="#d0d0d0"/></svg>
</div>
<div class="a" style="left:1199px;top:244px;width:241px;height:97px;background:#414141"></div>
<div class="a" style="left:1423px;top:245px;width:15px;height:96px;background:#464646"></div>
<div class="a" style="left:1438px;top:244px;width:2px;height:97px;background:#535353"></div>

<div class="cell" style="left:1199px;top:245px;background:#383838"><div class="sw" style="left:7px;top:7px;width:17px;height:17px;background:#fff;border:1px solid #111"></div></div>
<div class="cell" style="left:1231px;top:245px;background:#535353"><div class="sw" style="left:8px;top:8px;background:radial-gradient(circle at 50% 50%,#ffe000 0,#ff7a00 45%,#e81000 80%,#8a0000 100%);box-shadow:1px 1px 1px #222;border:1px solid #a00000;border-bottom-color:#400"></div></div>
<div class="cell" style="left:1263px;top:245px;background:#535353"><div class="sw" style="left:4px;top:4px;width:23px;height:23px;border-radius:5px;border:3px double #ecebc4;box-shadow:0 0 2px #ecebc4;background:#535353"></div></div>
<div class="cell" style="left:1295px;top:245px;background:#535353"><div class="sw" style="left:8px;top:8px;background:radial-gradient(circle at 55% 45%,#555 0,#555 12%,#222 18%,#555 30%,#2a2a2a 42%,#4a4a4a 55%,#222 70%,#333 100%);border-radius:2px;box-shadow:1px 1px 2px #222"></div></div>
<div class="cell" style="left:1327px;top:245px;background:#535353"><div class="sw" style="left:8px;top:8px;background:linear-gradient(160deg,#cfe3f7 0,#6fa8e0 25%,#1a6fd0 55%,#2a7fe0 80%,#6ab0f0 100%)"></div></div>
<div class="cell" style="left:1359px;top:245px;background:#535353"><div class="sw" style="left:8px;top:8px;background:#a9a9a9"></div></div>
<div class="cell" style="left:1391px;top:245px;background:#535353"><div class="sw" style="left:8px;top:8px;background:linear-gradient(180deg,#3a3a3a 0,#666 50%,#b5b5b5 100%);box-shadow:inset 2px 0 2px #444,inset -2px 0 2px #999"></div></div>
<div class="cell" style="left:1199px;top:277px;background:#535353"><div class="sw" style="left:8px;top:8px;background:#776643;box-shadow:0 0 1px #776643"></div></div>
<div class="cell" style="left:1231px;top:277px;background:#535353"><div class="sw" style="left:8px;top:8px;background:linear-gradient(#6b5726,#a89868)"></div></div>
<div class="cell" style="left:1263px;top:277px;background:#535353"><div class="sw" style="left:8px;top:8px;background:repeating-linear-gradient(180deg,#e8203a 0,#f04060 2px,#c89030 3px,#d81838 5px);border:1px solid #a01028"></div></div>
<div class="cell" style="left:1295px;top:277px;background:#535353"><div class="sw" style="left:8px;top:8px;background:conic-gradient(from 40deg at 55% 55%,#e8d020,#101010,#20c0b0,#102060,#e04080,#f0e040,#303000,#e8d020)"></div></div>
<div class="cell" style="left:1327px;top:277px;background:#535353"><div class="sw" style="left:8px;top:8px;background:#b8a800;border:4px solid #f0e000;border-right-color:#d8c400;border-bottom-color:#c8a800;border-top-color:#ffee20"></div></div>
<div class="cell" style="left:1359px;top:277px;background:#535353"><div class="sw" style="left:8px;top:8px;background:linear-gradient(170deg,#a87860 0,#d07848 40%,#e0a040 65%,#a0a040 100%)"></div></div>
<div class="cell" style="left:1391px;top:277px;background:#535353"><div class="sw" style="left:8px;top:8px;background:linear-gradient(#78b0f0,#b8d8f8 70%,#a0a8f0);border:1px solid #c8e0ff;border-bottom-color:#8890e0"></div></div>
<div class="cell" style="left:1199px;top:309px;background:#535353"><div class="sw" style="left:8px;top:8px;background:linear-gradient(#58a0e0 0,#d8e8f0 45%,#f0e8d0 55%,#6a4a10 62%,#c88a10 80%,#a86a08 100%)"></div></div>
<div class="cell" style="left:1231px;top:309px;background:#535353"><div class="sw" style="left:8px;top:8px;background:repeating-conic-gradient(from 10deg at 50% 50%,#fff 0 8deg,#888 8deg 14deg,#eee 14deg 25deg,#555 25deg 31deg)"></div></div>
<div class="cell" style="left:1263px;top:309px;background:#535353"><div class="sw" style="left:8px;top:8px;background:linear-gradient(#b070c0 0,#7060c0 35%,#4058b0 55%,#8060c0 80%,#c080c0 100%);box-shadow:2px 3px 2px #222"></div></div>
<div class="cell" style="left:1295px;top:309px;background:#535353"><div class="sw" style="left:5px;top:5px;width:21px;height:21px;border-radius:4px;background:radial-gradient(circle at 40% 35%,#e8c838 0,#c09010 50%,#8a6000 100%);border:1px solid #e8c030;box-shadow:0 1px 2px #222"></div></div>
<div class="cell" style="left:1327px;top:309px;background:#535353"><div class="sw" style="left:7px;top:7px;width:18px;height:18px;background:#b8a060;border:4px solid #ecd888;border-radius:2px;box-shadow:0 1px 2px #222,inset 0 0 0 1px #8a7030"></div></div>
<div class="cell" style="left:1359px;top:309px;background:#535353"><div class="sw" style="left:5px;top:5px;width:21px;height:21px;border-radius:4px;background:#f6eeb0;border:3px solid #e8dc98;box-shadow:0 1px 2px #222,inset 0 0 0 1px #c8b870"></div></div>
<div class="cell" style="left:1391px;top:309px;background:#535353"><div class="sw" style="left:8px;top:8px;background:#5a3018;border:4px solid #d89050;border-top-color:#f0c080;border-left-color:#c07838;border-bottom-color:#e8a860;box-shadow:0 0 0 1px #201008,1px 2px 2px #111;border-radius:1px"></div></div>
<svg style="left:1199px;top:245px" width="241" height="118" viewBox="1199 245 241 118"><path d="M1206 250.500L1226 270" stroke="#d01818" stroke-width="2"/><path d="M1427.500 255l3.500 -3.500l3.500 3.500z" fill="#e8e8e8"/><path d="M1427.500 331l3.500 3.500l3.500 -3.500z" fill="#e8e8e8"/><rect x="1425" y="263" width="12" height="10" rx="3" fill="#7a7a7a"/><g fill="none" stroke="#8a8a8a" stroke-width="1.500"><circle cx="1344.500" cy="350.500" r="5"/><path d="M1341 347l7 7"/></g><path d="M1371 345h10v10h-5v-5h-5z" fill="#8a8a8a"/><path d="M1371 351l4 4h-4z" fill="#8a8a8a"/><g fill="none" stroke="#8a8a8a" stroke-width="1.200"><path d="M1399 347.500h11M1402.500 347v-2h4v2M1400.500 348.500v7.500h8v-7.500M1403 349.500v5M1406 349.500v5"/></g><g fill="#262626"><rect x="1436" y="358" width="1" height="1"/><rect x="1434" y="358" width="1" height="1"/><rect x="1432" y="358" width="1" height="1"/><rect x="1430" y="358" width="1" height="1"/><rect x="1428" y="358" width="1" height="1"/><rect x="1436" y="356" width="1" height="1"/><rect x="1434" y="356" width="1" height="1"/><rect x="1432" y="356" width="1" height="1"/><rect x="1430" y="356" width="1" height="1"/><rect x="1436" y="354" width="1" height="1"/><rect x="1434" y="354" width="1" height="1"/><rect x="1432" y="354" width="1" height="1"/><rect x="1436" y="352" width="1" height="1"/><rect x="1434" y="352" width="1" height="1"/><rect x="1436" y="350" width="1" height="1"/></g></svg>
<div class="a" style="left:1199px;top:341px;width:241px;height:1px;background:#3c3c3c"></div>
<div class="a" style="left:1199px;top:359px;width:241px;height:3px;background:#3a3a3a"></div>
<style>
.btn{position:absolute;border:1px solid #333;border-radius:3px;background:linear-gradient(#6a6a6a,#585858);box-shadow:0 1px 0 #5f5f5f}
.fld{position:absolute;background:#3a3a3a;border:1px solid #333;color:#f2f2f2;font-size:11px;line-height:19px;padding-left:3px}
.ltxt{position:absolute;font-size:12px;color:#f0f0f0;white-space:nowrap}
</style>
<div class="a ptabrow" style="top:362px">
  <div class="ptab on" style="left:0;width:38px">图层</div>
  <div class="ptab" style="left:38px;width:37px">通道</div>
  <div class="ptab" style="left:75px;width:38px">路径</div>
  <div class="ptab" style="left:113px;width:61px">历史记录</div>
  <svg class="pmenu" viewBox="0 0 13 8"><path d="M0 1.500h4.500l-2.250 3z" fill="#d0d0d0"/><path d="M5.500 0.500h7.500M5.500 2.500h7.500M5.500 4.500h7.500M5.500 6.500h7.500" stroke="#d0d0d0"/></svg>
</div>
<div class="a" style="left:1199px;top:380px;width:241px;height:85px;background:#535353"></div>
<div class="a" style="left:1199px;top:406px;width:241px;height:1px;background:#444"></div>
<div class="a" style="left:1199px;top:434px;width:241px;height:1px;background:#444"></div>
<div class="a" style="left:1199px;top:464px;width:241px;height:1px;background:#3c3c3c;z-index:2"></div>
<!-- filter row -->
<div class="btn" style="left:1203px;top:384px;width:83px;height:18px"></div>
<div class="ltxt" style="left:1225px;top:385px;line-height:18px">类型</div>
<!-- blend row -->
<div class="btn" style="left:1203px;top:412px;width:111px;height:18px"></div>
<div class="ltxt" style="left:1212px;top:413px;line-height:18px">正常</div>
<div class="ltxt" style="left:1323px;top:413px;line-height:18px">不透明度:</div>
<div class="fld" style="left:1379px;top:411px;width:36px;height:19px">100%</div>
<div class="btn" style="left:1414px;top:411px;width:21px;height:19px;border-radius:0 3px 3px 0"></div>
<!-- lock row -->
<div class="ltxt" style="left:1206px;top:439px;line-height:18px">锁定:</div>
<div class="ltxt" style="left:1347px;top:440px;line-height:18px">填充:</div>
<div class="fld" style="left:1379px;top:439px;width:36px;height:19px">100%</div>
<div class="btn" style="left:1414px;top:439px;width:21px;height:19px;border-radius:0 3px 3px 0"></div>
<svg style="left:1199px;top:380px" width="241" height="84" viewBox="1199 380 241 84">
  <g fill="none" stroke="#e4e4e4" stroke-width="1.600"><circle cx="1217" cy="391.500" r="3.500"/><path d="M1214.500 394.500l-3.500 3.500"/></g>
  <path d="M1275.500 391l3 -3.500l3 3.500zM1275.500 394l3 3.500l3 -3.500z" fill="#e8e8e8"/>
  <!-- filter icons -->
  <g fill="none" stroke="#dcdcdc" stroke-width="1.200"><rect x="1300.500" y="387.500" width="12" height="10" rx="1"/></g>
  <path d="M1302 396l3 -3.500l2 2l2 -2.500l3 4z" fill="#dcdcdc"/><circle cx="1309.500" cy="390.500" r="1" fill="#dcdcdc"/>
  <circle cx="1330" cy="392" r="5" fill="none" stroke="#dcdcdc" stroke-width="1.400"/><path d="M1333.500 388.500a5 5 0 0 1 -7 7z" fill="#dcdcdc"/>
  <text x="1354" y="398" text-anchor="middle" font-family="Liberation Serif,serif" font-weight="bold" font-size="15" fill="#dcdcdc">T</text>
  <g fill="#535353" stroke="#dcdcdc" stroke-width="1.200"><rect x="1374.500" y="388.500" width="8" height="8" fill="none"/><rect x="1372.500" y="386.500" width="3" height="3"/><rect x="1381.500" y="386.500" width="3" height="3"/><rect x="1372.500" y="395.500" width="3" height="3"/><rect x="1381.500" y="395.500" width="3" height="3"/></g>
  <path d="M1400.500 386.500h5l2 2v8h-7z" fill="none" stroke="#dcdcdc" stroke-width="1.200"/><rect x="1397" y="392" width="6" height="6" fill="#dcdcdc" stroke="#535353" stroke-width="0.800"/>
  <rect x="1425.500" y="384.500" width="7" height="16" rx="1" fill="#4a4a4a" stroke="#333"/><rect x="1426" y="385" width="6" height="7" fill="#888"/>
  <!-- blend arrows -->
  <path d="M1303.500 419l3 -3.500l3 3.500zM1303.500 422l3 3.500l3 -3.500z" fill="#e8e8e8"/>
  <path d="M1421.500 419.500h6l-3 3.500z" fill="#e8e8e8"/>
  <path d="M1421.500 447.500h6l-3 3.500z" fill="#e8e8e8"/>
  <!-- lock icons -->
  <g><rect x="1243" y="444" width="11" height="11" fill="#d8d8d8"/><path d="M1243 444h4v4h-4zM1250 444h4v4h-4zM1247 448h3v3h-3zM1243 451h4v4h-4zM1250 451h4v4h-4z" fill="#888"/></g>
  <path d="M1279 441.500l-8 9l1.500 1.500z" fill="#dcdcdc"/><path d="M1270.500 450.500c-2 -0.300 -3 1 -3.500 2.500c-0.500 1 -1.500 1.500 -2.500 1.500c2.500 1.200 6 0.800 7 -1.500c0.500 -1 0 -2 -1 -2.500z" fill="#dcdcdc"/>
  <g stroke="#dcdcdc" stroke-width="1.200" fill="none"><path d="M1292.500 443v12M1286.500 449h12"/></g><path d="M1292.500 441.500l2.500 3h-5zM1292.500 456.500l2.500 -3h-5zM1285 449l3 -2.500v5zM1300 449l-3 -2.500v5z" fill="#dcdcdc"/>
  <rect x="1310.500" y="448" width="9" height="7.500" rx="1" fill="#dcdcdc"/><path d="M1312.500 448v-2.500a2.500 2.500 0 0 1 5 0v2.500" fill="none" stroke="#dcdcdc" stroke-width="1.500"/><rect x="1314.300" y="450.500" width="1.400" height="3" fill="#535353"/>
</svg>
<!-- layer list -->
<div class="a" style="left:1199px;top:464px;width:241px;height:378px;background:#474747"></div>
<div class="a" style="left:1424px;top:464px;width:16px;height:378px;background:#4c4c4c;border-left:1px solid #3c3c3c"></div>
<div class="a" style="left:1199px;top:464px;width:225px;height:39px;background:#535353"></div>
<div class="a" style="left:1230px;top:464px;width:194px;height:39px;background:#6b7f99"></div>
<div class="a" style="left:1199px;top:503px;width:225px;height:1px;background:#3c3c3c"></div>
<div class="a" style="left:1199px;top:504px;width:225px;height:39px;background:#535353"></div>
<div class="a" style="left:1199px;top:543px;width:225px;height:1px;background:#3c3c3c"></div>
<div class="a" style="left:1229px;top:464px;width:1px;height:79px;background:#3f3f3f"></div>
<!-- thumbs -->
<div class="a" style="left:1233px;top:468px;width:23px;height:32px;background-color:#fff;background-image:conic-gradient(#ccc 25%,#fff 0 50%,#ccc 0 75%,#fff 0);background-size:8px 8px;border:1px solid #111;box-shadow:0 0 0 1px #6b7f99"></div>
<svg style="left:1234px;top:469px" width="21" height="30" viewBox="433 196 355 534" preserveAspectRatio="none"><use href="#bride"/></svg>
<svg style="left:1230px;top:465px" width="28" height="38" viewBox="0 0 28 38"><path d="M1.500 6.500v-5h5M21.500 1.500h5v5M26.500 31.500v5h-5M6.500 36.500h-5v-5" fill="none" stroke="#fff" stroke-width="1"/></svg>
<div class="a" style="left:1233px;top:507px;width:23px;height:32px;background:#7a10f0;border:1px solid #111"></div>
<svg style="left:1234px;top:508px" width="21" height="30" viewBox="433 196 355 534" preserveAspectRatio="none"><use href="#bride"/></svg>
<div class="ltxt" style="left:1264px;top:477px;line-height:18px;font-size:12.500px;color:#fff">图层 1 拷贝</div>
<div class="ltxt" style="left:1264px;top:516px;line-height:18px;font-size:12.500px;color:#fff">图层 1</div>
<!-- eye -->
<svg style="left:1207px;top:479px" width="14" height="10" viewBox="0 0 14 10"><path d="M0.500 5C3 0.800 11 0.800 13.500 5C11 9.200 3 9.200 0.500 5z" fill="#d8d8d8"/><circle cx="7" cy="4.800" r="2.800" fill="#4a4a4a"/><circle cx="7" cy="4.800" r="1.300" fill="#d8d8d8"/></svg>
<div class="a" style="left:1208px;top:517px;width:12px;height:12px;border:1px solid #3c3c3c;background:#585858"></div>
<!-- footer -->
<div class="a" style="left:1199px;top:841px;width:241px;height:1px;background:#3a3a3a"></div>
<div class="a" style="left:1199px;top:842px;width:241px;height:18px;background:#535353"></div>
<svg style="left:1199px;top:842px" width="241" height="18" viewBox="1199 842 241 18">
  <g fill="none" stroke="#8e8e8e" stroke-width="1.500"><rect x="1237" y="848.500" width="7" height="5" rx="2.500"/><rect x="1242" y="848.500" width="7" height="5" rx="2.500"/></g>
  <text x="1264" y="856" font-family="Liberation Serif,serif" font-style="italic" font-size="14" fill="#d8d8d8">fx</text><path d="M1277 855.500h3l-1.500 2z" fill="#d8d8d8"/>
  <rect x="1291" y="846" width="13" height="10" fill="#d8d8d8"/><circle cx="1297.500" cy="851" r="2.800" fill="#535353"/>
  <circle cx="1323.500" cy="850.500" r="5" fill="none" stroke="#d8d8d8" stroke-width="1.500"/><path d="M1327 847a5 5 0 0 1 -7 7z" fill="#d8d8d8"/><path d="M1331 855.500h3l-1.500 2z" fill="#d8d8d8"/>
  <path d="M1345 846h5l1.500 1.500h6v8.500h-12.500z" fill="#d8d8d8"/>
  <path d="M1371 845.500h11v11h-5.500v-5.500h-5.500z" fill="#d8d8d8"/><path d="M1371 852.500l4 4h-4z" fill="#d8d8d8"/>
  <g fill="none" stroke="#d8d8d8" stroke-width="1.200"><path d="M1399 847.500h11M1402.500 847v-2h4v2M1400.500 848.500v7.500h8v-7.500M1403 849.500v5M1406 849.500v5"/></g>
</svg>
<div class="a" id="taskbar" style="left:0;top:859px;width:1440px;height:41px;background:
radial-gradient(ellipse 170px 34px at 1270px 0px,rgba(70,104,150,.6),transparent 100%),
radial-gradient(ellipse 70px 26px at 590px 41px,rgba(120,124,132,.6),transparent 100%),
radial-gradient(ellipse 60px 22px at 745px 8px,rgba(205,205,205,.6),transparent 100%),
linear-gradient(90deg,#8f9194 0,#9c9ea0 5%,#b0b2b4 14%,#adafb2 28%,#96999e 37%,#8e9298 42%,#a0a2a5 46%,#b9b9ba 51%,#afafb0 56%,#a6a7a9 64%,#94969b 70%,#7d8086 74%,#6d7380 80%,#67707e 90%,#70747a 100%);border-top:2px solid #2a2a2a;box-shadow:inset 0 1px 0 rgba(255,255,255,.5)"></div>
<svg style="left:0;top:860px" width="1440" height="40" viewBox="0 860 1440 40">
<defs>
  <radialGradient id="orb" cx="0.500" cy="0.350" r="0.700"><stop offset="0" stop-color="#8fd0ff"/><stop offset="0.450" stop-color="#2a78d0"/><stop offset="1" stop-color="#0a2a70"/></radialGradient>
  <pattern id="dots" width="3" height="4" patternUnits="userSpaceOnUse"><rect x="0" y="0" width="2" height="2" fill="#3a3a3a"/><rect x="1" y="2" width="1.500" height="1" fill="#c8c8c8" opacity=".5"/></pattern>
</defs>
<!-- start orb -->
<circle cx="27" cy="880" r="18.500" fill="#1a3a6a" opacity=".6"/>
<circle cx="27" cy="880" r="17" fill="url(#orb)" stroke="#cfe6ff" stroke-opacity=".6" stroke-width="1"/>
<g transform="translate(27 880) scale(1.200) translate(-26 -881.500)"><path d="M19 875c2.500 -1.500 5 -1.500 7 -0.500l-1.500 6c-2 -1 -4.500 -1 -7 0.500z" fill="#f0502a"/>
<path d="M27.500 875c2.500 1 5 1 7.500 -0.500l-1.500 6c-2.500 1.500 -5 1.500 -7.500 0.500z" fill="#8cc83c"/>
<path d="M17 882.500c2.500 -1.500 5 -1.500 7 -0.500l-1.500 6c-2 -1 -4.500 -1 -7 0.500z" fill="#3aa0f0"/>
<path d="M25.500 882.500c2.500 1 5 1 7.500 -0.500l-1.500 6c-2.500 1.500 -5 1.500 -7.500 0.500z" fill="#f8c820"/></g>
<rect x="57" y="864" width="9" height="32" fill="url(#dots)"/>
<!-- button 1 -->
<rect x="76.500" y="861.500" width="58" height="37" rx="3" fill="#fff" fill-opacity=".32" stroke="#3c3c3c" stroke-opacity=".7"/>
<rect x="77.500" y="862.500" width="56" height="35" rx="2" fill="none" stroke="#fff" stroke-opacity=".5"/>
<circle cx="105" cy="880" r="14" fill="#2aa0e8"/>
<path d="M-12 0C-6 -3.500 6 -3.500 12 0C6 3.500 -6 3.500 -12 0z" fill="#fff" transform="translate(105 880) rotate(-45)"/><circle cx="105" cy="880" r="6" fill="#fff"/>
<!-- button 2 -->
<rect x="138.500" y="861.500" width="58" height="37" rx="3" fill="#fff" fill-opacity=".55" stroke="#3c3c3c" stroke-opacity=".7"/>
<rect x="139.500" y="862.500" width="56" height="35" rx="2" fill="none" stroke="#fff" stroke-opacity=".7"/>
<rect x="154" y="866" width="26.500" height="25.500" fill="#0c1830" stroke="#30b0e8" stroke-width="2"/>
<text x="159" y="885" font-family="Liberation Sans,sans-serif" font-weight="bold" font-size="16.500" fill="#6cc4f4" textLength="15.500" lengthAdjust="spacingAndGlyphs">Ps</text>
<!-- right area -->
<rect x="1039" y="864" width="9" height="32" fill="url(#dots)"/>
<text x="1052" y="884" font-size="12" fill="#fff" font-family="Liberation Sans,Noto Sans CJK SC,sans-serif">桌面</text>
<path d="M1084.500 867l3 3l-3 3M1088.500 867l3 3l-3 3" fill="none" stroke="#fff" stroke-width="1.200"/>
<rect x="1101" y="864" width="9" height="32" fill="url(#dots)"/>
<text x="1119" y="883" font-size="12" fill="#fff" font-family="Liberation Mono,monospace" textLength="13" lengthAdjust="spacingAndGlyphs">CH</text>
<!-- sogou -->
<g transform="rotate(-8 1148 878)"><rect x="1141" y="871" width="14" height="14" rx="2" fill="#f05020"/><text x="1148" y="883.500" text-anchor="middle" font-family="Liberation Sans,sans-serif" font-weight="bold" font-style="italic" font-size="14" fill="#fff">S</text></g>
<circle cx="1170" cy="877.500" r="7.500" fill="#1020a0" stroke="#c0c8e0" stroke-width="1"/><text x="1170" y="882" text-anchor="middle" font-family="Liberation Sans,sans-serif" font-weight="bold" font-size="11" fill="#fff">?</text>
<path d="M1190.500 869.500h5v3h-5zM1188.500 871.500h5v3h-5z" fill="none" stroke="#fff" stroke-width="1"/><path d="M1189 882h5l-2.500 3z" fill="#fff"/>
<!-- wifi tray -->
<rect x="1206" y="873" width="16" height="16" rx="2" fill="#2a98f0"/>
<g fill="none" stroke="#fff" stroke-width="1.500"><path d="M1208.500 879.500a8 8 0 0 1 11 0"/><path d="M1210.500 882.500a5 5 0 0 1 7 0"/></g><circle cx="1214" cy="885.500" r="1.300" fill="#fff"/>
<!-- shield -->
<path d="M1238 873l6.500 2v6c0 4 -3 6.500 -6.500 8c-3.500 -1.500 -6.500 -4 -6.500 -8v-6z" fill="#38a030" stroke="#e8f0e0" stroke-width="1.200"/><path d="M1239.500 876l-4 5.500h3l-1.500 4.500l4.500 -6h-3z" fill="#fff"/>
<!-- 360 -->
<circle cx="1262" cy="881" r="8" fill="#f0e020" stroke="#60a010" stroke-width="1.500"/><path d="M1262 876.500v9M1257.500 881h9" stroke="#106010" stroke-width="2.500"/>
<!-- printer -->
<path d="M1279 880l3 -4h10l1 4v6h-14z" fill="#d8d8d8" stroke="#999" stroke-width="0.600"/><path d="M1284 884l3 4l7 -9" fill="none" stroke="#38b838" stroke-width="2.500"/>
<!-- signal -->
<g fill="#fff" stroke="#333" stroke-width="0.500"><rect x="1303" y="884" width="2" height="2"/><rect x="1306" y="882" width="2" height="4"/><rect x="1309" y="880" width="2" height="6"/><rect x="1312" y="878" width="2" height="8"/><rect x="1315" y="876" width="2.500" height="10"/></g>
<!-- speaker -->
<path d="M1327 878h3l4 -4v14l-4 -4h-3z" fill="#fff" stroke="#444" stroke-width="0.500"/><g fill="none" stroke="#fff" stroke-width="1.300"><path d="M1336 877.500a5 5 0 0 1 0 7"/><path d="M1338.500 875.500a8 8 0 0 1 0 11"/></g>
<text x="1388" y="876.500" text-anchor="middle" font-size="12" fill="#fff" font-family="Liberation Sans,sans-serif">16:10</text>
<text x="1387" y="894.500" text-anchor="middle" font-size="12" fill="#fff" font-family="Liberation Sans,sans-serif">2015/8/8</text>
<rect x="1426.500" y="861.500" width="14" height="39" fill="#c0c0c0" fill-opacity=".35" stroke="#3a3a3a"/><rect x="1427.500" y="862.500" width="12" height="37" fill="none" stroke="#fff" stroke-opacity=".35"/>
</svg>
<!-- floating widgets -->
<svg style="left:1240px;top:770px" width="200" height="60" viewBox="1240 770 200 60">
<defs>
  <linearGradient id="pill" x1="0" y1="0" x2="0" y2="1"><stop offset="0" stop-color="#ffffff"/><stop offset="0.600" stop-color="#f0f0f0"/><stop offset="1" stop-color="#cfcfcf"/></linearGradient>
  <linearGradient id="gball" x1="0" y1="0" x2="0" y2="1"><stop offset="0" stop-color="#1a6a3a"/><stop offset="0.300" stop-color="#2a9a50"/><stop offset="0.320" stop-color="#4ccc74"/><stop offset="1" stop-color="#3cc064"/></linearGradient>
</defs>
<!-- sogou bar -->
<rect x="1262" y="781.500" width="176" height="22" fill="#f4f6f8" stroke="#b8c4d0" stroke-width="1"/>
<g transform="rotate(-8 1269 791)"><rect x="1256" y="778" width="25" height="25" rx="3" fill="#f05a28"/><text x="1268.500" y="800" text-anchor="middle" font-family="Liberation Sans,sans-serif" font-weight="bold" font-style="italic" font-size="25" fill="#fff">S</text></g>
<text x="1285" y="798" font-family="Liberation Sans,Noto Sans CJK SC,sans-serif" font-weight="bold" font-size="14" fill="#1a70d0">英</text>
<!-- wrench -->
<path d="M1421 798l6.500 -7.500" stroke="#2a80e0" stroke-width="3" stroke-linecap="round"/><circle cx="1429.500" cy="788.500" r="2.700" fill="none" stroke="#2a80e0" stroke-width="2.600" stroke-dasharray="12.800 4.200" transform="rotate(-5 1429.500 788.500)"/>
<circle cx="1433" cy="781" r="3.800" fill="#f04020"/>
<!-- pill -->
<rect x="1297.500" y="782.500" width="123" height="38" rx="19" fill="url(#pill)" stroke="#9a9a9a" stroke-width="1"/>
<circle cx="1319" cy="801" r="23.500" fill="#f4f4f4" stroke="#aaa" stroke-width="0.800"/>
<circle cx="1319" cy="801" r="21" fill="url(#gball)"/>
<path d="M1299.500 793a21 21 0 0 1 39 0z" fill="#1e7a44"/>
<ellipse cx="1319" cy="786" rx="10" ry="3.500" fill="#fff" opacity=".25"/>
<text x="1318" y="806" text-anchor="middle" font-family="Liberation Sans,sans-serif" font-size="14" fill="#fff">65%</text>
<path d="M1350 799v-7M1347.500 794.500l2.500 -3l2.500 3" fill="none" stroke="#e04030" stroke-width="1.500"/>
<path d="M1350 803v7M1347.500 807.500l2.500 3l2.500 -3" fill="none" stroke="#20a040" stroke-width="1.500"/>
<text x="1392" y="798.500" text-anchor="end" font-family="Liberation Sans,sans-serif" font-size="9.500" fill="#222">0K/s</text>
<text x="1392" y="813" text-anchor="end" font-family="Liberation Sans,sans-serif" font-size="9.500" fill="#222">0K/s</text>
<circle cx="1406" cy="802" r="9" fill="#3a8ae8" stroke="#d8e4f4" stroke-width="1"/><path d="M1406 797.500v9M1401.500 802h9" stroke="#fff" stroke-width="2"/>
<circle cx="1412" cy="795" r="3.300" fill="#e03030"/>
</svg>
<style>
#dd{left:94px;top:23px;width:241px;height:831px;background:#f0f0f0;border:1px solid #f0f0f0;padding:2px 2px 0 2px;color:#111;font-size:12px;box-shadow:1px 1px 0 rgba(40,40,40,.55),2px 2px 2px rgba(0,0,0,.45)}
#dd .it{position:relative;height:21px;line-height:22px;white-space:nowrap}
#dd .it .lb{position:absolute;left:14px;top:0}
#dd .it .sc{position:absolute;right:14.500px;top:0;letter-spacing:0.500px}
#dd .it .arr{position:absolute;right:6px;top:7px;width:0;height:0;border-left:4px solid #111;border-top:4px solid transparent;border-bottom:4px solid transparent}
#dd .it.dis{color:#8e8e8e}
#dd .it.dis .arr{border-left-color:#8e8e8e}
#dd .it.hl{background:#3399ff;color:#fff}
#dd .sep{height:9px;position:relative}
#dd .sep:after{content:"";position:absolute;left:1px;right:2px;top:4px;height:1px;background:#a0a0a0;box-shadow:0 1px 0 #fff}
</style>
<div class="a" id="ddshadow"></div>
<div class="a" id="dd">
<div class="it"><span class="lb">还原清除(O)</span><span class="sc">Ctrl+Z</span></div>
<div class="it dis"><span class="lb">前进一步(W)</span><span class="sc">Shift+Ctrl+Z</span></div>
<div class="it"><span class="lb">后退一步(K)</span><span class="sc">Alt+Ctrl+Z</span></div>
<div class="sep"></div>
<div class="it dis"><span class="lb">渐隐(D)...</span><span class="sc">Shift+Ctrl+F</span></div>
<div class="sep"></div>
<div class="it"><span class="lb">剪切(T)</span><span class="sc">Ctrl+X</span></div>
<div class="it"><span class="lb">拷贝(C)</span><span class="sc">Ctrl+C</span></div>
<div class="it"><span class="lb">合并拷贝(Y)</span><span class="sc">Shift+Ctrl+C</span></div>
<div class="it"><span class="lb">粘贴(P)</span><span class="sc">Ctrl+V</span></div>
<div class="it"><span class="lb">选择性粘贴(I)</span><span class="arr"></span></div>
<div class="it hl"><span class="lb">清除(E)</span></div>
<div class="sep"></div>
<div class="it dis"><span class="lb">拼写检查(H)...</span></div>
<div class="it dis"><span class="lb">查找和替换文本(X)...</span></div>
<div class="sep"></div>
<div class="it"><span class="lb">填充(L)...</span><span class="sc">Shift+F5</span></div>
<div class="it"><span class="lb">描边(S)...</span></div>
<div class="sep"></div>
<div class="it"><span class="lb">内容识别缩放</span><span class="sc">Alt+Shift+Ctrl+C</span></div>
<div class="it"><span class="lb">操控变形</span></div>
<div class="it"><span class="lb">透视变形</span></div>
<div class="it"><span class="lb">自由变换(F)</span><span class="sc">Ctrl+T</span></div>
<div class="it"><span class="lb">变换</span><span class="arr"></span></div>
<div class="it dis"><span class="lb">自动对齐图层...</span></div>
<div class="it dis"><span class="lb">自动混合图层...</span></div>
<div class="sep"></div>
<div class="it"><span class="lb">定义画笔预设(B)...</span></div>
<div class="it dis"><span class="lb">定义图案...</span></div>
<div class="it dis"><span class="lb">定义自定形状...</span></div>
<div class="sep"></div>
<div class="it"><span class="lb">清理(R)</span><span class="arr"></span></div>
<div class="sep"></div>
<div class="it"><span class="lb">Adobe PDF 预设...</span></div>
<div class="it"><span class="lb">预设</span><span class="arr"></span></div>
<div class="it"><span class="lb">远程连接...</span></div>
<div class="sep"></div>
<div class="it"><span class="lb">颜色设置(G)...</span><span class="sc">Shift+Ctrl+K</span></div>
<div class="it"><span class="lb">指定配置文件...</span></div>
<div class="it"><span class="lb">转换为配置文件(V)...</span></div>
<div class="sep"></div>
<div class="it"><span class="lb">键盘快捷键...</span><span class="sc">Alt+Shift+Ctrl+K</span></div>
<div class="it"><span class="lb">菜单(U)...</span><span class="sc">Alt+Shift+Ctrl+M</span></div>
<div class="it"><span class="lb">首选项(N)</span><span class="arr"></span></div>
<div class="it dis"><span class="lb">同步设置(E)</span><span class="arr"></span></div>
</div>
</body>
</html>
